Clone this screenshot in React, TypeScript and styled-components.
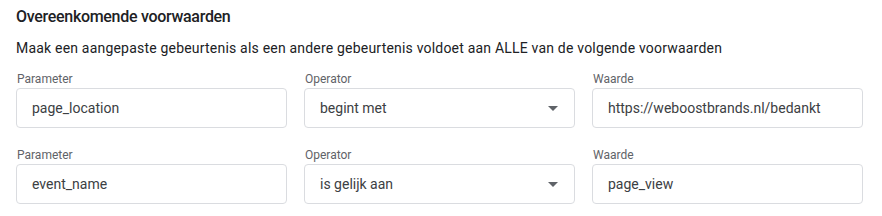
import React from 'react';
import styled, { createGlobalStyle } from 'styled-components';

const GlobalStyle = createGlobalStyle`
    html, body {
        margin: 0;
        padding: 0;
        background: #ffffff;
        font-family: Roboto, "Liberation Sans", Arial, sans-serif;
        -webkit-font-smoothing: antialiased;
    }
`;

// --- layout ---

const Section = styled.section`
    width: 882px;
    padding: 5px 19px 0 16px;
    box-sizing: border-box;
`;

const Title = styled.h2`
    margin: 0;
    font-size: 16px;
    line-height: 24px;
    font-weight: 500;
    letter-spacing: -0.3px;
    color: #202124;
`;

const Description = styled.p`
    margin: 9px 0 0;
    font-size: 14px;
    line-height: 20px;
    letter-spacing: 0.2px;
    color: #202124;
`;

const ConditionRow = styled.div<{ $first?: boolean }>`
    display: grid;
    grid-template-columns: repeat(3, 1fr);
    column-gap: 17px;
    margin-top: ${(p) => (p.$first ? '13px' : '19px')};
`;

const Field = styled.div`
    display: flex;
    flex-direction: column;
`;

const Label = styled.label`
    font-size: 12px;
    line-height: 16px;
    color: #5f6368;
    margin-bottom: 1px;
    padding-left: 1px;
`;

const Box = styled.div`
    height: 40px;
    box-sizing: border-box;
    border: 1px solid #dadce0;
    border-radius: 4px;
    display: flex;
    align-items: center;
    justify-content: space-between;
    padding: 0 15px;
    font-size: 14px;
    color: #3c4043;
`;

const Caret = styled.span`
    width: 0;
    height: 0;
    border-left: 5px solid transparent;
    border-right: 5px solid transparent;
    border-top: 5px solid #5f6368;
    margin-right: 1px;
`;

type Condition = { param: string; operator: string; value: string };

const conditions: Condition[] = [
    { param: 'page_location', operator: 'begint met', value: 'https://weboostbrands.nl/bedankt' },
    { param: 'event_name', operator: 'is gelijk aan', value: 'page_view' },
];

export default function App() {
    return (
        <>
            <GlobalStyle />
            <Section>
                <Title>Overeenkomende voorwaarden</Title>
                <Description>
                    Maak een aangepaste gebeurtenis als een andere gebeurtenis voldoet aan ALLE van de volgende voorwaarden
                </Description>
                {conditions.map((c, i) => (
                    <ConditionRow key={c.param} $first={i === 0}>
                        <Field>
                            <Label>Parameter</Label>
                            <Box>{c.param}</Box>
                        </Field>
                        <Field>
                            <Label>Operator</Label>
                            <Box>
                                {c.operator}
                                <Caret />
                            </Box>
                        </Field>
                        <Field>
                            <Label>Waarde</Label>
                            <Box>{c.value}</Box>
                        </Field>
                    </ConditionRow>
                ))}
            </Section>
        </>
    );
}
